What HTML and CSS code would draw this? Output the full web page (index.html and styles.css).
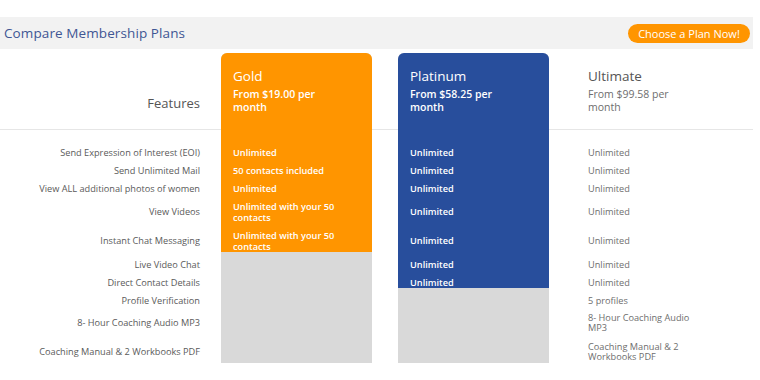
FILE: index.html
```html
<!DOCTYPE html>
<html lang="en">
<head>
<meta charset="utf-8">
<title>Compare Membership Plans</title>
<link rel="stylesheet" href="styles.css">
</head>
<body>
<div class="topbar">
  <h1 class="title">Compare Membership Plans</h1>
  <a class="cta" href="#">Choose a Plan Now!</a>
</div>
<div class="plans">
  <div class="col labels">
    <div class="head"><span class="features">Features</span></div>
    <div class="spacer"></div>
    <div class="cell h18">Send Expression of Interest (EOI)</div>
    <div class="cell h18">Send Unlimited Mail</div>
    <div class="cell h18">View ALL additional photos of women</div>
    <div class="cell h29">View Videos</div>
    <div class="cell h29">Instant Chat Messaging</div>
    <div class="cell h18">Live Video Chat</div>
    <div class="cell h18">Direct Contact Details</div>
    <div class="cell h18">Profile Verification</div>
    <div class="cell h26">8- Hour Coaching Audio MP3</div>
    <div class="cell h32">Coaching Manual &amp; 2 Workbooks PDF</div>
  </div>
  <div class="col plan gold">
    <div class="fill">
      <div class="head">
        <div class="name">Gold</div>
        <div class="price">From $19.00 per month</div>
      </div>
      <div class="spacer"></div>
      <div class="cell h18"><span>Unlimited</span></div>
      <div class="cell h18"><span>50 contacts included</span></div>
      <div class="cell h18"><span>Unlimited</span></div>
      <div class="cell h29"><span>Unlimited with your 50 contacts</span></div>
      <div class="cell h29"><span>Unlimited with your 50 contacts</span></div>
    </div>
  </div>
  <div class="col plan platinum">
    <div class="fill">
      <div class="head">
        <div class="name">Platinum</div>
        <div class="price">From $58.25 per month</div>
      </div>
      <div class="spacer"></div>
      <div class="cell h18"><span>Unlimited</span></div>
      <div class="cell h18"><span>Unlimited</span></div>
      <div class="cell h18"><span>Unlimited</span></div>
      <div class="cell h29"><span>Unlimited</span></div>
      <div class="cell h29"><span>Unlimited</span></div>
      <div class="cell h18"><span>Unlimited</span></div>
      <div class="cell h18"><span>Unlimited</span></div>
    </div>
  </div>
  <div class="col plan ultimate">
    <div class="head">
      <div class="name">Ultimate</div>
      <div class="price">From $99.58 per month</div>
    </div>
    <div class="spacer"></div>
    <div class="cell h18"><span>Unlimited</span></div>
    <div class="cell h18"><span>Unlimited</span></div>
    <div class="cell h18"><span>Unlimited</span></div>
    <div class="cell h29"><span>Unlimited</span></div>
    <div class="cell h29"><span>Unlimited</span></div>
    <div class="cell h18"><span>Unlimited</span></div>
    <div class="cell h18"><span>Unlimited</span></div>
    <div class="cell h18"><span>5 profiles</span></div>
    <div class="cell h26"><span>8- Hour Coaching Audio MP3</span></div>
    <div class="cell h32"><span>Coaching Manual &amp; 2 Workbooks PDF</span></div>
  </div>
</div>
</body>
</html>
```

FILE: styles.css
```css
* { box-sizing: border-box; }
html, body { margin: 0; padding: 0; background: #fff; }
body {
  font-family: "Open Sans", "Noto Sans", sans-serif;
  color: #555;
  width: 760px;
  height: 380px;
  overflow: hidden;
}
.topbar {
  margin-top: 17px;
  width: 753px;
  height: 32px;
  background: #f2f2f2;
  display: flex;
  align-items: center;
  justify-content: space-between;
  padding: 0 3px 0 4px;
}
.title {
  margin: 0;
  font-size: 13.5px;
  font-weight: 400;
  color: #3f5694;
  letter-spacing: 0.1px;
}
.cta {
  display: flex;
  align-items: center;
  justify-content: center;
  width: 122px;
  height: 19px;
  border-radius: 10px;
  background: #ff9500;
  color: #fff;
  font-size: 11px;
  text-decoration: none;
}
.plans {
  margin-top: 4px;
  width: 753px;
  display: flex;
  align-items: flex-start;
  background: linear-gradient(to bottom, transparent 76px, #e6e6e6 76px, #e6e6e6 77px, transparent 77px);
}
.col { display: flex; flex-direction: column; }
.head { height: 76px; }
.spacer { height: 15px; }
.cell { display: flex; align-items: center; font-size: 9.2px; line-height: 10.5px; }
.h18 { height: 18px; }
.h26 { height: 26px; }
.h29 { height: 29px; }
.h32 { height: 32px; }

.labels { width: 221px; padding-right: 21px; text-align: right; color: #5a5a5a; }
.labels .head { display: flex; align-items: flex-end; justify-content: flex-end; padding-bottom: 18px; }
.features { font-size: 13px; line-height: 16px; color: #555; }
.labels .cell { justify-content: flex-end; }

.plan { width: 151px; }
.plan .head { padding: 14px 0 0 12px; }
.plan .cell { padding-left: 12px; }
.plan .cell span { max-width: 112px; }
.name { font-size: 13.5px; line-height: 18px; }
.price { max-width: 112px; font-size: 10.5px; line-height: 13px; margin-top: 3px; }

.gold, .platinum {
  height: 310px;
  background: #d9d9d9;
  border-radius: 6px 6px 0 0;
  overflow: hidden;
  color: #fff;
}
.gold .fill { height: 199px; background: #ff9500; }
.platinum { margin-left: 26px; }
.platinum .fill { height: 235px; background: #284e9c; }
.gold .name, .platinum .name { font-weight: 500; }
.gold .price, .platinum .price { font-weight: 600; }
.gold .cell, .platinum .cell { font-weight: 600; }

.ultimate { margin-left: 27px; color: #6e6e6e; }
.ultimate .name { color: #555; }
```
